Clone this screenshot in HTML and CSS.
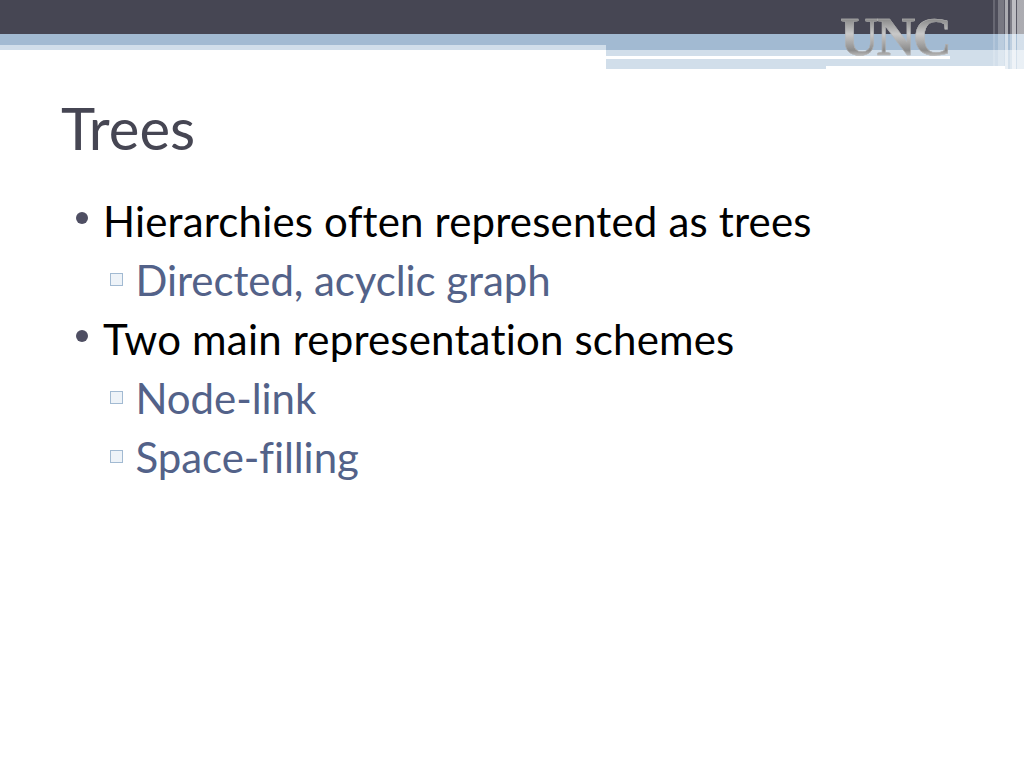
FILE: index.html
```html
<!DOCTYPE html>
<html lang="en">
<head>
<meta charset="utf-8">
<title>Trees</title>
<link rel="stylesheet" href="styles.css">
</head>
<body>
<div class="slide">
  <header class="banner">
    <div class="band-dark"></div>
    <div class="band-row">
      <div class="band-left">
        <div class="left-mid"></div>
        <div class="left-light"></div>
      </div>
      <div class="band-right">
        <div class="right-mid"></div>
        <div class="right-light"></div>
        <div class="right-line"><div class="right-line-white"></div></div>
        <div class="right-bottom">
          <div class="right-bottom-a"></div>
          <div class="right-bottom-b"></div>
          <div class="right-bottom-c"></div>
        </div>
      </div>
    </div>
    <div class="logo">UNC</div>
    <div class="stripes"></div>
  </header>
  <h1 class="title">Trees</h1>
  <ul class="points">
    <li class="point">Hierarchies often represented as trees</li>
    <li class="sub">Directed, acyclic graph</li>
    <li class="point">Two main representation schemes</li>
    <li class="sub">Node-link</li>
    <li class="sub">Space-filling</li>
  </ul>
</div>
</body>
</html>
```
FILE: styles.css
```css
* { box-sizing: border-box; }
html, body { margin: 0; padding: 0; background: #fff; }
.slide { width: 1024px; height: 768px; overflow: hidden; font-family: "Lato", "Open Sans", sans-serif; font-variant-ligatures: none; }
.banner { position: relative; height: 69px; }
.band-dark { height: 34px; background: #464653; }
.band-row { display: flex; height: 35px; }
.band-left { width: 606px; }
.left-mid { height: 11px; background: #a2bad2; }
.left-light { height: 5px; background: #d1deea; }
.band-right { flex: 1; display: flex; flex-direction: column; }
.right-mid { height: 16px; background: #a2bad2; }
.right-light { height: 6px; background: #d1deea; }
.right-line { height: 3px; background: #d1deea; }
.right-line-white { width: 344px; height: 3px; background: #fff; }
.right-bottom { display: flex; height: 10px; }
.right-bottom-a { width: 220px; background: #d1deea; }
.right-bottom-b { width: 179px; height: 7px; background: #d1deea; }
.right-bottom-c { flex: 1; background: #d1deea; }
.logo { position: absolute; left: 840px; top: 7px; font-family: "Liberation Serif", serif; font-weight: 700; font-size: 54px; letter-spacing: -2.5px; line-height: 60px; background: linear-gradient(180deg, #8f8f8f 22%, #c9c9c9 45%, #8c8c8c 72%, #dedede 88%); -webkit-background-clip: text; background-clip: text; color: transparent; -webkit-text-stroke: .4px #b5b5b5; }
.stripes { position: absolute; left: 993px; top: 0; width: 31px; height: 69px; background: linear-gradient(90deg, rgba(255,255,255,.18) 0, rgba(255,255,255,.18) 2px, rgba(255,255,255,.04) 2px, rgba(255,255,255,.04) 5px, rgba(255,255,255,.27) 5px, rgba(255,255,255,.27) 11px, rgba(255,255,255,.12) 11px, rgba(255,255,255,.12) 12px, rgba(255,255,255,.55) 12px, rgba(255,255,255,.55) 15px, rgba(255,255,255,.06) 15px, rgba(255,255,255,.06) 17px, rgba(255,255,255,.3) 17px, rgba(255,255,255,.3) 19px, rgba(255,255,255,.65) 19px, rgba(255,255,255,.65) 23px, rgba(255,255,255,.1) 23px, rgba(255,255,255,.1) 24px, rgba(255,255,255,.55) 24px, rgba(255,255,255,.55) 31px); }
.title { margin: 25px 0 0 61px; font-size: 58px; line-height: 68px; font-weight: 400; color: #464653; }
.points { list-style: none; margin: 30px 0 0; padding: 0; font-size: 42px; line-height: 59px; }
.point { position: relative; padding-left: 103px; color: #000; letter-spacing: .18px; }
.point::before { content: ""; position: absolute; left: 76px; top: 20px; width: 12px; height: 12px; border-radius: 50%; background: #4f4f63; }
.sub { position: relative; padding-left: 135.5px; color: #536289; letter-spacing: -.07px; }
.sub::before { content: ""; position: absolute; left: 110px; top: 22px; width: 11px; height: 11px; background: #eef3f8; border: 1px solid #a2bad2; }
```
